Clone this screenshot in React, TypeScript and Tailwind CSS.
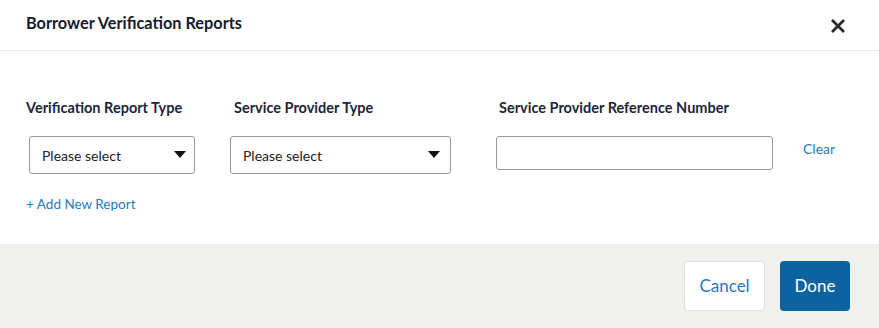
import React from "react";

function Caret() {
  return (
    <svg width="12" height="8" viewBox="0 0 12 8" className="shrink-0">
      <path d="M0 0 L12 0 L6 7 Z" fill="#111" />
    </svg>
  );
}

export default function App() {
  return (
    <div
      className="w-[879px] h-[328px] bg-white flex flex-col"
      style={{ fontFamily: '"Lato", "Open Sans", sans-serif' }}
    >
      <div className="h-[51px] border-b border-[#e8e8e8] flex items-center justify-between pl-[26px] pr-[33px] shrink-0">
        <div className="text-[16.3px] font-bold text-[#141a30] -mt-[3px]">Borrower Verification Reports</div>
        <svg width="16" height="16" viewBox="0 0 16 16" className="mt-[1px]">
          <path d="M2 2 L14 14 M14 2 L2 14" stroke="#2a2a2a" strokeWidth="2.8" strokeLinecap="butt" />
        </svg>
      </div>
      <div className="flex-1 pt-[47px] pl-[26px] pr-[40px]">
        <div className="flex items-start text-[14px]">
          <div className="w-[208px] flex flex-col">
            <div className="font-bold text-[14.5px] text-[#22253a] h-[20px] leading-[20px]">Verification Report Type</div>
            <div className="mt-[18px] ml-[3px] w-[166px] h-[38px] border border-[#999] rounded-[3px] flex items-center justify-between pl-[12px] pr-[8px] text-[#222]">
              <span>Please select</span>
              <Caret />
            </div>
          </div>
          <div className="w-[265px] flex flex-col">
            <div className="font-bold text-[14.5px] text-[#22253a] h-[20px] leading-[20px]">Service Provider Type</div>
            <div className="mt-[18px] -ml-[4px] w-[221px] h-[38px] border border-[#999] rounded-[3px] flex items-center justify-between pl-[12px] pr-[10px] text-[#222]">
              <span>Please select</span>
              <Caret />
            </div>
          </div>
          <div className="w-[304px] flex flex-col">
            <div className="font-bold text-[14.5px] text-[#22253a] h-[20px] leading-[20px]">Service Provider Reference Number</div>
            <div className="mt-[18px] -ml-[3px] w-[277px] h-[34px] border border-[#999] rounded-[3px]" />
          </div>
          <div className="mt-[40px] text-[#1f7bbf]">Clear</div>
        </div>
        <div className="mt-[20px] text-[13.5px] text-[#1f7bbf]">+ Add New Report</div>
      </div>
      <div className="h-[84px] bg-[#f0f0ef] flex items-center justify-end gap-[15px] pr-[29px] shrink-0">
        <button className="w-[81px] h-[50px] bg-white rounded-[4px] border border-[#e0e0e0] text-[17px] text-[#1f7bbf]">Cancel</button>
        <button className="w-[70px] h-[50px] bg-[#0c63a0] rounded-[4px] text-[17px] text-white">Done</button>
      </div>
    </div>
  );
}
